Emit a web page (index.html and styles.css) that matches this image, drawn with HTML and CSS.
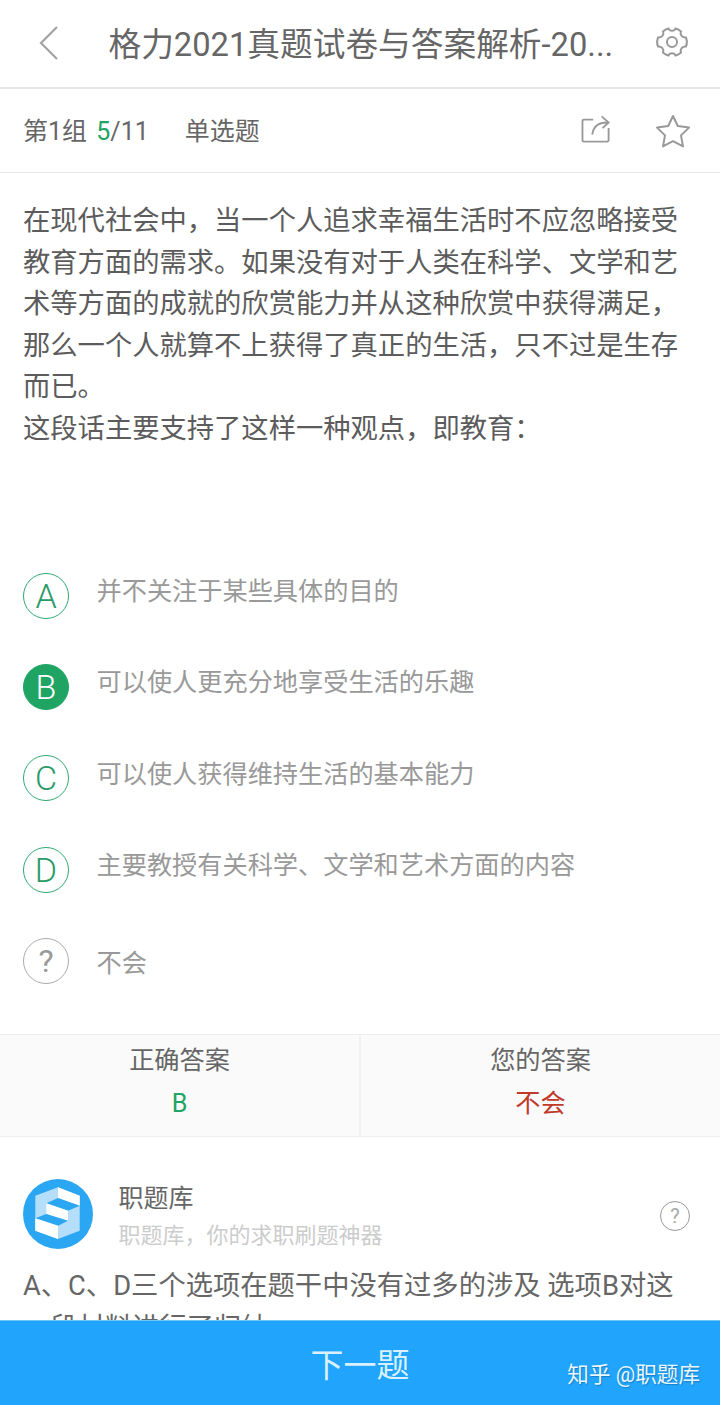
FILE: index.html
```html
<!DOCTYPE html>
<html lang="zh">
<head>
<meta charset="utf-8">
<title>职题库</title>
<link rel="stylesheet" href="styles.css">
</head>
<body>
<div class="page">
  <header class="topbar">
    <svg class="back" width="22" height="36" viewBox="0 0 22 36"><path d="M19 2 L3 18 L19 34" fill="none" stroke="#a3a3a3" stroke-width="2.2"/></svg>
    <h1 class="title">格力2021真题试卷与答案解析-20...</h1>
    <svg class="gear" width="34" height="34" viewBox="0 0 34 34" fill="none" stroke="#999" stroke-width="2"><path d="M13.5 3.5 C14.5 6.5 19.5 6.5 20.5 3.5 C22.5 4 24.5 5 26 6.5 C24.5 9.5 27.5 13 31 12.5 C32 15 32 19 31 21.5 C27.5 21 24.5 24.5 26 27.5 C24.5 29 22.5 30 20.5 30.5 C19.5 27.5 14.5 27.5 13.5 30.5 C11.5 30 9.5 29 8 27.5 C9.5 24.5 6.5 21 3 21.5 C2 19 2 15 3 12.5 C6.5 13 9.5 9.5 8 6.5 C9.5 5 11.5 4 13.5 3.5 Z"/><circle cx="17" cy="17" r="5"/></svg>
  </header>
  <div class="meta">
    <span class="meta-text">第1组 <span class="green">5</span>/11</span>
    <span class="meta-type">单选题</span>
    <svg class="share" width="32" height="28" viewBox="0 0 32 30" fill="none" stroke="#999" stroke-width="2"><path d="M13 5 H3 A1.5 1.5 0 0 0 1.5 6.5 V27 A1.5 1.5 0 0 0 3 28.5 H28 A1.5 1.5 0 0 0 29.5 27 V14"/><path d="M12 21 C13 13 18 8 28 8 M22 1.5 L29.5 8 L23 14"/></svg>
    <svg class="star" width="36" height="34" viewBox="0 0 36 34" fill="none" stroke="#999" stroke-width="2" stroke-linejoin="round"><path d="M18 2 L22.8 12 L34 13.6 L26 21.4 L28 32.4 L18 27.2 L8 32.4 L10 21.4 L2 13.6 L13.2 12 Z"/></svg>
  </div>
  <main>
    <p class="question">在现代社会中，当一个人追求幸福生活时不应忽略接受教育方面的需求。如果没有对于人类在科学、文学和艺术等方面的成就的欣赏能力并从这种欣赏中获得满足，那么一个人就算不上获得了真正的生活，只不过是生存而已。<br>这段话主要支持了这样一种观点，即教育：</p>
    <ul class="options">
      <li class="option"><span class="badge">A</span><span class="option-text">并不关注于某些具体的目的</span></li>
      <li class="option"><span class="badge badge-on">B</span><span class="option-text">可以使人更充分地享受生活的乐趣</span></li>
      <li class="option"><span class="badge">C</span><span class="option-text">可以使人获得维持生活的基本能力</span></li>
      <li class="option"><span class="badge">D</span><span class="option-text">主要教授有关科学、文学和艺术方面的内容</span></li>
      <li class="option option-unknown"><span class="badge badge-grey">?</span><span class="option-text">不会</span></li>
    </ul>
    <section class="answers">
      <div class="answer"><div class="answer-label">正确答案</div><div class="answer-value green">B</div></div>
      <div class="answer"><div class="answer-label">您的答案</div><div class="answer-value red">不会</div></div>
    </section>
    <section class="source">
      <svg class="logo" width="70" height="70" viewBox="0 0 70 70">
        <circle cx="35" cy="35" r="35" fill="#2aa6f2"/>
        <path d="M12.3 16.7 L35 8.3 L56.7 16.7 L56.7 51.7 L35 60 L12.3 51.7 Z" fill="#b5defa"/>
        <path d="M35 8.3 L56.7 16.7 L56.7 26.7 L35 19 Z" fill="#fff"/>
        <path d="M23.3 24.3 L35 19 L56.7 26.7 L45 31.7 Z" fill="#2aa6f2"/>
        <path d="M23.3 24.3 L45 31.7 L45 41.7 L23.3 35 Z" fill="#fff"/>
        <path d="M23.3 35 L45 41.7 L35 46.7 L12.3 39.3 Z" fill="#2aa6f2"/>
        <path d="M12.3 39.3 L35 46.7 L35 60 L12.3 51.7 Z" fill="#fff"/>
      </svg>
      <div class="source-text">
        <div class="source-name">职题库</div>
        <div class="source-desc">职题库，你的求职刷题神器</div>
      </div>
      <span class="help">?</span>
    </section>
    <p class="analysis">A、C、D三个选项在题干中没有过多的涉及 选项B对这一段材料进行了归纳</p>
  </main>
  <footer class="next">
    <span class="next-label">下一题</span>
    <span class="watermark">知乎 @职题库</span>
  </footer>
</div>
</body>
</html>
```
FILE: styles.css
```css
* { box-sizing: border-box; }
html, body { margin: 0; padding: 0; }
body {
  background: #fff;
  font-family: "Roboto", "Noto Sans CJK SC", sans-serif;
  color: #666;
}
.page {
  position: relative;
  width: 720px;
  height: 1405px;
  overflow: hidden;
  background: #fff;
}
.topbar {
  height: 89px;
  display: flex;
  align-items: center;
  padding: 0 31px 2px 38px;
  border-bottom: 2px solid #e6e6e6;
}
.back { flex: none; }
.title {
  flex: 1;
  margin: -2px 0 0 48.5px;
  font-size: 32.7px;
  font-weight: 400;
  color: #666;
  white-space: nowrap;
}
.gear { flex: none; margin-top: -2px; }
.meta {
  height: 84px;
  display: flex;
  align-items: center;
  padding: 0 29px 4px 23px;
  font-size: 25px;
  color: #666;
  border-bottom: 1px solid #e8e8e8;
}
.meta-text { word-spacing: 3px; }
.meta-type { margin-left: 36px; }
.green { color: #1fa463; }
.red { color: #c0392b; }
.share { margin-left: auto; margin-right: 43px; }
.star { margin-top: 4px; }
.question {
  margin: 0;
  padding: 28px 23px 0;
  height: 377px;
  font-size: 27.3px;
  line-height: 41.6px;
  color: #5c5c5c;
}
.options {
  list-style: none;
  margin: 0;
  padding: 0 23px;
}
.option {
  height: 91.3px;
  display: flex;
  align-items: center;
  color: #999;
  font-size: 25.2px;
}
.option-text { margin-left: 27.5px; margin-top: -13px; }
.option-unknown { height: 119px; padding-bottom: 28px; }
.option-unknown .option-text { margin-top: 0; }
.badge {
  flex: none;
  width: 46px;
  height: 46px;
  border-radius: 50%;
  border: 1.5px solid #2fa873;
  color: #2a9a68;
  font-size: 34px;
  font-weight: 300;
  display: flex;
  align-items: center;
  justify-content: center;
}
.badge-on { background: #1fa463; border-color: #1fa463; color: #fff; }
.badge-grey { border-color: #aaa; color: #999; font-weight: 400; font-size: 32px; }
.answers {
  height: 103px;
  display: grid;
  grid-template-columns: 1fr 1fr;
  gap: 2px;
  background: #f2f2f2;
  border-top: 1px solid #eee;
  border-bottom: 1px solid #eee;
}
.answer {
  background: #fafafa;
  text-align: center;
  padding-top: 8px;
}
.answer-label { font-size: 25.2px; line-height: 36px; color: #666; }
.answer-value { font-size: 25.2px; line-height: 36px; margin-top: 7px; }
.source {
  display: flex;
  align-items: center;
  padding: 43px 30px 0 23px;
}
.logo { flex: none; margin-top: -4px; }
.source-text { flex: 1; margin-left: 25.5px; }
.source-name { font-size: 25px; line-height: 36px; color: #666; margin-top: 1px; }
.source-desc { font-size: 22px; line-height: 30px; color: #ccc; margin-top: 4px; }
.help {
  flex: none;
  width: 30px;
  height: 30px;
  border-radius: 50%;
  border: 1.5px solid #999;
  color: #aaa;
  font-size: 20px;
  display: flex;
  align-items: center;
  justify-content: center;
}
.analysis {
  margin: 15px 0 0;
  padding: 0 23px;
  font-size: 27.3px;
  line-height: 41.6px;
  color: #666;
}
.next {
  position: absolute;
  left: 0;
  right: 0;
  bottom: 0;
  height: 85px;
  background: #20a4fc;
  border-top: 1px solid #6cc4f5;
  display: flex;
  align-items: center;
  justify-content: center;
  color: #d9f1ff;
}
.next-label { font-size: 33px; margin-top: 0; }
.watermark {
  position: absolute;
  right: 20px;
  top: 40px;
  font-size: 21.6px;
  line-height: 28px;
  color: #eaf7ff;
  text-shadow: 1px 1px 1px rgba(0,60,110,.35);
}
```
